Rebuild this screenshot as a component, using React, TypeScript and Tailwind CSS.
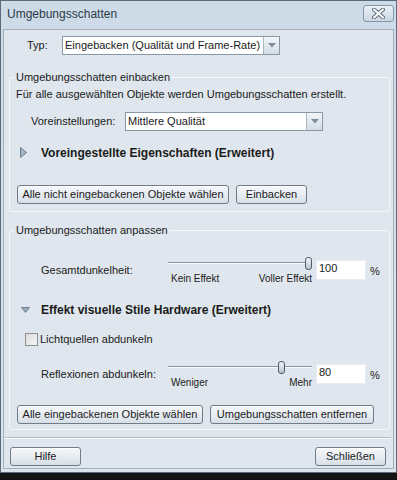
import type { ReactNode } from "react";

function Button({ children, width }: { children: ReactNode; width: string }) {
    return (
        <button
            className={`${width} h-[19px] shrink-0 rounded-[3px] border border-[#707b87] bg-gradient-to-b from-[#f5f7f9] via-[#e8edf2] to-[#d6dee6] text-center leading-[17px] text-[#1b1b1b] shadow-[inset_0_1px_0_#ffffff]`}
        >
            {children}
        </button>
    );
}

function Select({ value, width }: { value: string; width: string }) {
    return (
        <div className={`${width} flex h-[19px] shrink-0 border border-[#8a97a5] bg-white`}>
            <div className="flex-1 truncate pl-[2px] leading-[17px]">{value}</div>
            <div className="flex w-[16px] items-center justify-center border-l border-[#a9b4bf] bg-gradient-to-b from-[#f3f6f9] to-[#d3dce5]">
                <svg width="8" height="5" viewBox="0 0 8 5">
                    <polygon points="0,0 8,0 4,4.5" fill="#7d8d9d" />
                </svg>
            </div>
        </div>
    );
}

function Slider({ thumb, left, right }: { thumb: number; left: string; right: string }) {
    return (
        <div className="flex w-[148px] shrink-0 flex-col">
            <div className="relative h-[13px]">
                <div className="absolute left-0 top-[5px] h-[1px] w-[144px] bg-[#8896a5]" />
                <div className="absolute left-0 top-[6px] h-[1px] w-[144px] bg-[#f7f9fb]" />
                <div
                    className="absolute top-0 h-[13px] w-[7px] rounded-[3px] border border-[#4e5c6a] bg-gradient-to-b from-[#f2f5f8] to-[#b7c3cf]"
                    style={{ left: thumb }}
                />
            </div>
            <div className="mt-[3px] flex w-[144px] justify-between pl-[3px] text-[10px] leading-[12px]">
                <span>{left}</span>
                <span>{right}</span>
            </div>
        </div>
    );
}

function SliderRow({ label, thumb, left, right, value }: { label: string; thumb: number; left: string; right: string; value: string }) {
    return (
        <div className="flex items-start pl-[26px]">
            <div className="w-[127px] shrink-0 pt-[7px] leading-[13px]">{label}</div>
            <Slider thumb={thumb} left={left} right={right} />
            <div className="mt-[3px] h-[20px] w-[50px] shrink-0 border border-[#e8edf2] bg-white pl-[2px] leading-[14px]">{value}</div>
            <div className="ml-[4px] pt-[8px] leading-[13px]">%</div>
        </div>
    );
}

function Expander({ open, children }: { open: boolean; children: ReactNode }) {
    return (
        <div className="flex h-[15px] items-center">
            {open ? (
                <div className="ml-[6px] mr-[11px] flex w-[9px] shrink-0">
                    <svg width="9" height="6" viewBox="0 0 9 6">
                        <polygon points="0.5,0.5 8.5,0.5 4.5,5.5" fill="#9aabbb" stroke="#6f8192" strokeWidth="1" />
                    </svg>
                </div>
            ) : (
                <div className="ml-[5px] mr-[14px] flex w-[7px] shrink-0">
                    <svg width="7" height="11" viewBox="0 0 7 11">
                        <polygon points="0.5,0.5 6.5,5.5 0.5,10.5" fill="#a4b3c2" stroke="#6b7d8f" strokeWidth="1" />
                    </svg>
                </div>
            )}
            <span className="text-[12px] font-bold">{children}</span>
        </div>
    );
}

export default function App() {
    return (
        <div className="h-[480px] w-[397px] overflow-hidden bg-[#141414] font-['Liberation_Sans',Arial,sans-serif] text-[11px] text-[#1b1b1b]">
            <div className="flex h-[473px] flex-col border border-[#5d6a78] bg-gradient-to-b from-[#cddae7] to-[#dbe5ef]">
                {/* title bar */}
                <div className="flex h-[28px] shrink-0 items-start justify-between pl-[6px] pr-[2px]">
                    <span className="pt-[6px] text-[12px] leading-[15px] text-[#2c3a48]">Umgebungsschatten</span>
                    <div className="mt-[4px] flex h-[17px] w-[31px] items-center justify-center rounded-[3px] border border-[#8596a8] bg-gradient-to-b from-[#eaf0f6] to-[#cad6e3]">
                        <svg width="13" height="11" viewBox="0 0 13 11">
                            <path d="M2 1.5 L11 9.5 M11 1.5 L2 9.5" stroke="#5f6e7d" strokeWidth="4" strokeLinecap="round" />
                            <path d="M2 1.5 L11 9.5 M11 1.5 L2 9.5" stroke="#ffffff" strokeWidth="2" strokeLinecap="round" />
                        </svg>
                    </div>
                </div>

                {/* client area */}
                <div className="mx-[2px] mb-[3px] flex flex-1 flex-col border border-[#a3afbb] bg-[#dfe6ed] pl-[5px] pr-[3px]">
                    <div className="mt-[6px] flex items-center pl-[18px]">
                        <span className="w-[35px] shrink-0">Typ:</span>
                        <Select value="Eingebacken (Qualität und Frame-Rate)" width="w-[218px]" />
                    </div>

                    <fieldset className="mt-[16px] rounded-[3px] border border-[#f5f8fb] pl-[5px] pb-[7px]">
                        <legend className="px-[1px] leading-[13px]">Umgebungsschatten einbacken</legend>
                        <div className="mt-[4px] pl-[1px] leading-[13px]">Für alle ausgewählten Objekte werden Umgebungsschatten erstellt.</div>
                        <div className="mt-[11px] flex items-center pl-[16px]">
                            <span className="w-[94px] shrink-0">Voreinstellungen:</span>
                            <Select value="Mittlere Qualität" width="w-[198px]" />
                        </div>
                        <div className="mt-[14px]">
                            <Expander open={false}>Voreingestellte Eigenschaften (Erweitert)</Expander>
                        </div>
                        <div className="mt-[25px] flex gap-[7px] pl-[2px]">
                            <Button width="w-[212px]">Alle nicht eingebackenen Objekte wählen</Button>
                            <Button width="w-[71px]">Einbacken</Button>
                        </div>
                    </fieldset>

                    <fieldset className="mt-[12px] rounded-[3px] border border-[#f5f8fb] pl-[5px] pb-[5px]">
                        <legend className="px-[1px] leading-[13px]">Umgebungsschatten anpassen</legend>
                        <div className="mt-[20px]">
                            <SliderRow label="Gesamtdunkelheit:" thumb={137} left="Kein Effekt" right="Voller Effekt" value="100" />
                        </div>
                        <div className="mt-[17px]">
                            <Expander open={true}>Effekt visuelle Stile Hardware (Erweitert)</Expander>
                        </div>
                        <label className="mt-[16px] flex items-center pl-[10px]">
                            <span className="h-[13px] w-[13px] shrink-0 border border-[#8e8f8f] bg-gradient-to-br from-[#dcdcdc] to-[#f6f6f6]" />
                            <span className="ml-[2px] leading-[13px]">Lichtquellen abdunkeln</span>
                        </label>
                        <div className="mt-[15px]">
                            <SliderRow label="Reflexionen abdunkeln:" thumb={110} left="Weniger" right="Mehr" value="80" />
                        </div>
                        <div className="mt-[16px] flex gap-[7px] pl-[2px]">
                            <Button width="w-[186px]">Alle eingebackenen Objekte wählen</Button>
                            <Button width="w-[164px]">Umgebungsschatten entfernen</Button>
                        </div>
                    </fieldset>

                    <div className="-ml-[4px] -mr-[1px] mt-[7px] border-t border-[#b3bdc8] shadow-[0_1px_0_#f7f9fb]" />

                    <div className="mt-[9px] flex justify-between pl-[1px] pr-[4px]">
                        <Button width="w-[71px]">Hilfe</Button>
                        <Button width="w-[71px]">Schließen</Button>
                    </div>
                </div>
            </div>
        </div>
    );
}
